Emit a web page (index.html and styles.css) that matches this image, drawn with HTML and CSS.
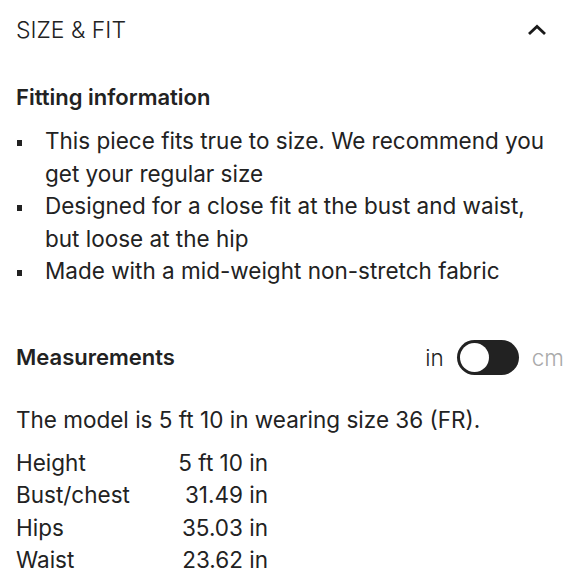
FILE: index.html
```html
<!DOCTYPE html>
<html lang="en">
<head>
    <meta charset="UTF-8">
    <meta name="viewport" content="width=device-width, initial-scale=1.0">
    <title>Size &amp; Fit</title>
<link rel="stylesheet" href="styles.css">
</head>
<body>
    <div class="panel">
        <div class="panel-head">
            <span class="panel-title">SIZE &amp; FIT</span>
            <svg class="chevron" width="22" height="14" viewBox="0 0 22 14">
                <path d="M3 11 L11 3.5 L19 11" fill="none" stroke="#1a1a1a" stroke-width="2.8"/>
            </svg>
        </div>

        <h2 class="sub">Fitting information</h2>
        <ul class="fit-list">
            <li>This piece fits true to size. We recommend you get your regular size</li>
            <li>Designed for a close fit at the bust and waist, but loose at the hip</li>
            <li>Made with a mid-weight non-stretch fabric</li>
        </ul>

        <div class="measure-head">
            <h2 class="sub">Measurements</h2>
            <div class="units">
                <span class="unit-on">in</span>
                <span class="switch"><span class="knob"></span></span>
                <span class="unit-off">cm</span>
            </div>
        </div>

        <p class="model">The model is 5 ft 10 in wearing size 36 (FR).</p>

        <table class="sizes">
            <tr><td>Height</td><td class="val">5 ft 10 in</td></tr>
            <tr><td>Bust/chest</td><td class="val">31.49 in</td></tr>
            <tr><td>Hips</td><td class="val">35.03 in</td></tr>
            <tr><td>Waist</td><td class="val">23.62 in</td></tr>
        </table>
    </div>
</body>
</html>
```

FILE: styles.css
```css
body {
    margin: 0;
    background: #fff;
    color: #222;
    font-family: Inter, Roboto, sans-serif;
    font-size: 22.5px;
}

.panel {
    padding: 0 16px;
}

.panel-head {
    display: flex;
    justify-content: space-between;
    align-items: center;
    height: 60px;
    padding-right: 16px;
}

.panel-title {
    font-weight: 300;
    font-size: 23px;
}

.sub {
    margin: 0;
    font-size: 22px;
    font-weight: 600;
    line-height: 32px;
}

.panel-head + .sub {
    margin-top: 21px;
}

.fit-list {
    list-style: none;
    margin: 12px 0 0;
    padding: 0;
    max-width: 540px;
}

.fit-list li {
    position: relative;
    padding-left: 29px;
    line-height: 32.5px;
}

.fit-list li::before {
    content: "";
    position: absolute;
    left: 1px;
    top: 15px;
    width: 5px;
    height: 6px;
    background: #222;
}

.measure-head {
    display: flex;
    justify-content: space-between;
    align-items: center;
    margin-top: 52px;
}

.units {
    display: flex;
    align-items: center;
    gap: 13px;
    font-weight: 300;
}

.unit-off {
    color: #aaa;
}

.switch {
    display: block;
    width: 62px;
    height: 35px;
    border-radius: 18px;
    background: #222;
    position: relative;
}

.knob {
    position: absolute;
    left: 3px;
    top: 3px;
    width: 29px;
    height: 29px;
    border-radius: 50%;
    background: #fff;
}

.model {
    margin: 29px 0 0;
    line-height: 32px;
}

.sizes {
    border-collapse: collapse;
    margin-top: 11px;
    width: 252px;
}

.sizes td {
    padding: 0;
    line-height: 32.5px;
}

.sizes .val {
    text-align: right;
}
```
